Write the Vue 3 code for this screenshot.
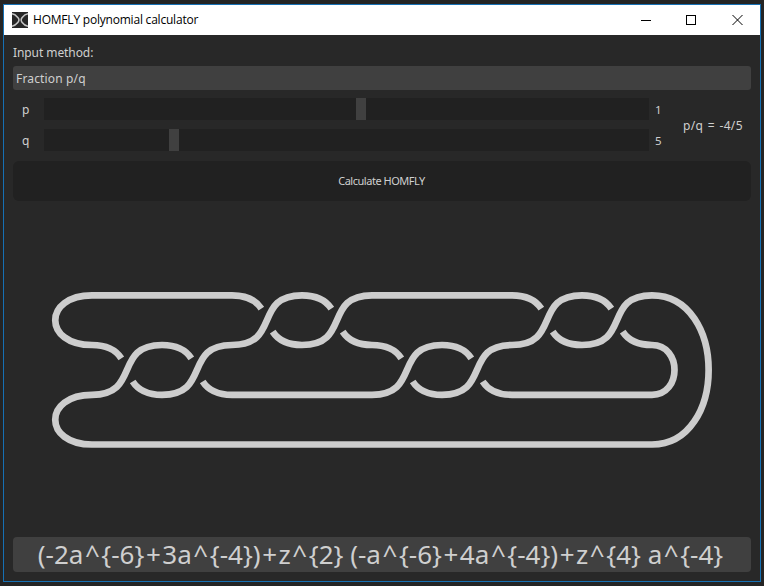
<script setup>
import { ref } from 'vue'

const levels = [295.3, 345, 394.8, 444.5]
const startX = 92
const step = 70
const pull = 49
const gap = 0.34

const nodeX = (n) => startX + n * step

// De Casteljau split, keeping the first part of the curve
function firstPart(p, t) {
  const mix = (a, b) => [a[0] + (b[0] - a[0]) * t, a[1] + (b[1] - a[1]) * t]
  const ab = mix(p[0], p[1])
  const bc = mix(p[1], p[2])
  const cd = mix(p[2], p[3])
  const abc = mix(ab, bc)
  const bcd = mix(bc, cd)
  return [p[0], ab, abc, mix(abc, bcd)]
}

const toPath = (p) => `M${p[0]} C${p[1]} ${p[2]} ${p[3]}`

function crossing(n, level) {
  const x0 = nodeX(n)
  const x1 = nodeX(n + 1)
  const top = levels[level]
  const bottom = levels[level + 1]
  const over = [[x0, bottom], [x0 + pull, bottom], [x1 - pull, top], [x1, top]]
  const under = [[x0, top], [x0 + pull, top], [x1 - pull, bottom], [x1, bottom]]
  return [
    toPath(over),
    toPath(firstPart(under, gap)),
    toPath(firstPart([...under].reverse(), gap)),
  ]
}

const line = (a, b, level) => `M${nodeX(a)},${levels[level]} H${nodeX(b)}`
const cap = (n, from, to, reach) => {
  const x = nodeX(n)
  return toPath([[x, levels[from]], [x + reach, levels[from]], [x + reach, levels[to]], [x, levels[to]]])
}

const strands = [
  ...[[0, 1], [1, 1], [2, 0], [3, 0], [4, 1], [5, 1], [6, 0], [7, 0]].flatMap(([n, l]) => crossing(n, l)),
  line(0, 2, 0),
  line(4, 6, 0),
  line(2, 4, 2),
  line(6, 8, 2),
  line(0, 8, 3),
  cap(0, 0, 1, -pull),
  cap(0, 2, 3, -pull),
  cap(8, 1, 2, 30),
  cap(8, 0, 3, 75.5),
]

const sliders = ref([
  { name: 'p', value: 1, offset: 312 },
  { name: 'q', value: 5, offset: 125 },
])

// Operators are set a little wider than the other characters
const polynomial = '(-2a^{-6}+3a^{-4})+z^{2} (-a^{-6}+4a^{-4})+z^{4} a^{-4}'
const pieces = polynomial.split(/([\^+])/)
</script>

<template>
  <div class="desktop">
    <div class="window">
      <header class="titlebar">
        <svg class="logo" width="16" height="16" viewBox="0 0 16 16">
          <rect width="16" height="16" fill="#262626" />
          <g fill="none" stroke="#c4c4c4" stroke-width="1.5">
            <path d="M0 1.8C3.5 2.2 4.8 4.4 6 5.8C7.4 7.4 7.4 8.6 6 10.2C4.8 11.6 3.5 13.8 0 14.2" />
            <path d="M16 1.8C12.5 2.2 11.2 4.2 10 5.8C8.8 7.4 8.8 8.6 10 10.2C11.2 11.8 12.5 13.8 16 14.2" />
          </g>
        </svg>
        <span class="title">HOMFLY polynomial calculator</span>
        <div class="controls">
          <svg width="11" height="11" viewBox="0 0 11 11"><path d="M1 5.5H11" /></svg>
          <svg width="11" height="11" viewBox="0 0 11 11"><path d="M.5 .5H9.5V9.5H.5V.5Z" /></svg>
          <svg class="close" width="11" height="11" viewBox="0 0 11 11"><path d="M.5 0L10.5 10M10.5 0L.5 10" /></svg>
        </div>
      </header>
      <main class="content">
        <div class="label">Input method:</div>
        <div class="select">Fraction p/q</div>
        <div class="fraction">
          <div class="sliders">
            <div v-for="s in sliders" :key="s.name" class="row">
              <span class="name">{{ s.name }}</span>
              <div class="track"><div class="handle" :style="{ marginLeft: s.offset + 'px' }"></div></div>
              <span class="value">{{ s.value }}</span>
            </div>
          </div>
          <div class="ratio">p/q <span class="equals">=</span> -4/5</div>
        </div>
        <button class="calculate">Calculate HOMFLY</button>
        <svg class="knot" width="738" height="336" viewBox="13 201 738 336">
          <path v-for="(d, i) in strands" :key="i" :d="d" />
        </svg>
        <div class="result"><span v-for="(s, i) in pieces" :key="i" :class="{ operator: i % 2 }">{{ s }}</span></div>
      </main>
    </div>
  </div>
</template>

<style>
body {
  margin: 0;
  background: #242424;
}
</style>

<style scoped>
.desktop {
  box-sizing: border-box;
  width: 764px;
  height: 586px;
  padding: 4px 3px;
  background: #242424;
  font-family: "Noto Sans", "Open Sans", sans-serif;
  font-size: 12px;
  color: #cfcfcf;
}
.window {
  box-sizing: border-box;
  width: 758px;
  height: 578px;
  border: 1px solid #1670b4;
  background: #282828;
}
.titlebar {
  display: flex;
  align-items: center;
  height: 30px;
  padding-left: 8px;
  background: #fff;
  color: #000;
}
.logo {
  margin-right: 5px;
}
.title {
  height: 18px;
  font-family: "Open Sans", sans-serif;
  font-size: 12px;
  line-height: 17px;
  letter-spacing: -0.21px;
  white-space: nowrap;
}
.controls {
  display: flex;
  gap: 35px;
  margin-left: auto;
  padding-right: 17px;
}
.controls svg {
  fill: none;
  stroke: #000;
  stroke-width: 1;
  shape-rendering: crispEdges;
}
.controls .close {
  shape-rendering: auto;
}
.content {
  padding: 0 9px;
}
.label {
  height: 31px;
  line-height: 35px;
  letter-spacing: -0.08px;
}
.select {
  height: 24px;
  padding-left: 3px;
  border-radius: 3px;
  background: #404040;
  line-height: 25px;
  letter-spacing: 0.15px;
}
.fraction {
  display: flex;
  height: 71px;
}
.sliders {
  display: flex;
  flex-direction: column;
  gap: 9px;
  padding-top: 8px;
}
.row {
  display: flex;
  height: 22px;
  line-height: 23px;
}
.name {
  width: 22px;
  padding-left: 9px;
}
.track {
  width: 605px;
  background: #212121;
}
.handle {
  width: 10px;
  height: 22px;
  background: #404040;
}
.value {
  width: 28px;
  padding-left: 6px;
  font-size: 11.5px;
}
.ratio {
  line-height: 71px;
  letter-spacing: 0.35px;
  white-space: nowrap;
}
.equals {
  padding: 0 1px;
}
.calculate {
  display: block;
  width: 738px;
  height: 40px;
  padding: 0 1px 2px 0;
  border: 0;
  border-radius: 6px;
  background: #212121;
  color: #cfcfcf;
  font: 11px "Noto Sans", sans-serif;
  letter-spacing: -0.47px;
}
.knot {
  display: block;
  fill: none;
  stroke: #cdcdcd;
  stroke-width: 6.7;
}
.result {
  display: flex;
  align-items: center;
  justify-content: center;
  height: 35px;
  padding-right: 3px;
  border-radius: 4px;
  background: #404040;
  font-size: 26px;
  line-height: 35px;
  white-space: pre;
}
.operator {
  padding: 0 1.55px;
}
</style>
